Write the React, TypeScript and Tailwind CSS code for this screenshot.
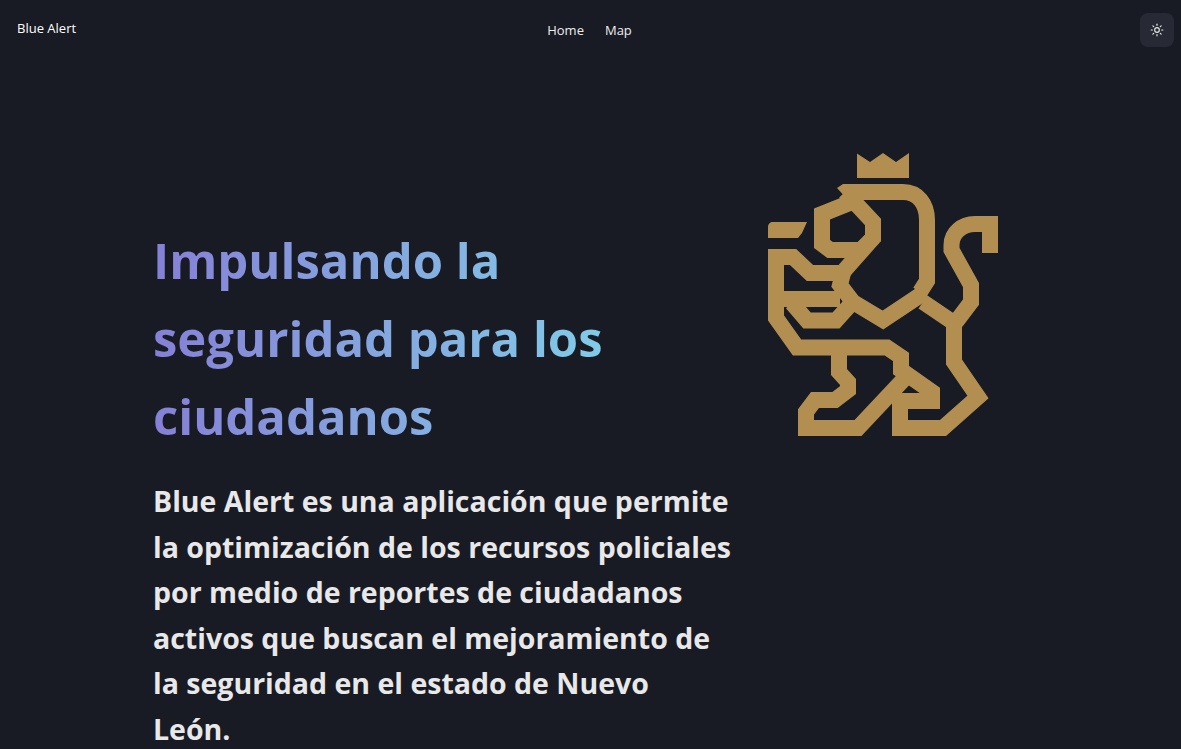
import { Sun } from 'lucide-react';

const GOLD = '#b28f50';

function Lion() {
  return (
    <svg viewBox="760 145 240 295" className="w-[240px] h-[295px]" fill="none" stroke={GOLD} strokeWidth="16" strokeLinejoin="miter" strokeMiterlimit="3">
      {/* crown and the paw held up in front of the head */}
      <path d="M857 153.500V178H909V153L896 162 883 153 870 162z" fill={GOLD} stroke="none" />
      <path d="M768 227c0-3 2-5 5-5h34l-5 11-4 5H768z" fill={GOLD} stroke="none" />
      {/* pointed end of the mane */}
      <path d="M837 188 843 184H860V200H848z" fill={GOLD} stroke="none" />
      {/* mane, running down into the chest */}
      <path d="M850 192H903C918 192 927 204 927 220V281L920 292" />
      {/* head */}
      <path d="M845 192 873 222V238L861 250H830L822 244V214L857 200" />
      <path d="M873 238 843 272" />
      {/* upper arm, chest V and branch to the back */}
      <path d="M776 298V257H793L810 273H843L840 285 853 302 883 320 925 292" />
      <path d="M923 302 954 323" />
      {/* lower paw */}
      <path d="M776 299H840" />
      <path d="M850 305 836 320.500H807L792 303" />
      {/* body and hind leg */}
      <path d="M776 298V318L797 347.500H887L901 357V370L932 392V401H900V428H943L978 397 954 362V320" />
      {/* tail */}
      <path d="M956 322 971 302V285L951.500 250V245C951.500 233 962 224 975 224H990V253" />
      {/* front leg */}
      <path d="M839 348V372L848 382V390L835 400H815L806 412V428H858L905 378" />
    </svg>
  );
}

export default function App() {
  return (
    <div className="min-h-screen bg-[#181a24] text-[#e6e6e6] font-['Open_Sans','Noto_Sans',sans-serif]">
      <header className="flex items-start justify-between h-[58px] pl-[17px] pr-[7px] pt-[13px]">
        <a className="text-[13px] leading-[32px] -mt-[1px] w-[108px] text-white">Blue Alert</a>
        <nav className="flex gap-[21px] text-[13px] leading-[34px] text-[#ededed]">
          <a>Home</a>
          <a>Map</a>
        </nav>
        <div className="flex justify-end w-[120px]">
          <button className="flex items-center justify-center w-[34px] h-[34px] rounded-lg bg-[#272a35] text-[#e6e6e6]">
            <Sun size={14} />
          </button>
        </div>
      </header>
      <main className="flex items-start pl-[153px]">
        <div className="w-[607px] pt-[163px]">
          <h1 className="w-[470px] text-[49px] leading-[78px] font-bold text-transparent bg-clip-text bg-gradient-to-r from-[#8580d6] to-[#80cfe8]">
            Impulsando la seguridad para los ciudadanos
          </h1>
          <p className="mt-[24px] w-[579px] text-[28.5px] leading-[45.5px] font-bold text-[#e8e8e8]">
            Blue Alert es una aplicación que permite la optimización de los recursos policiales por medio de reportes de ciudadanos activos que buscan el mejoramiento de la seguridad en el estado de Nuevo León.
          </p>
        </div>
        <div className="pt-[87px]">
          <Lion />
        </div>
      </main>
    </div>
  );
}
